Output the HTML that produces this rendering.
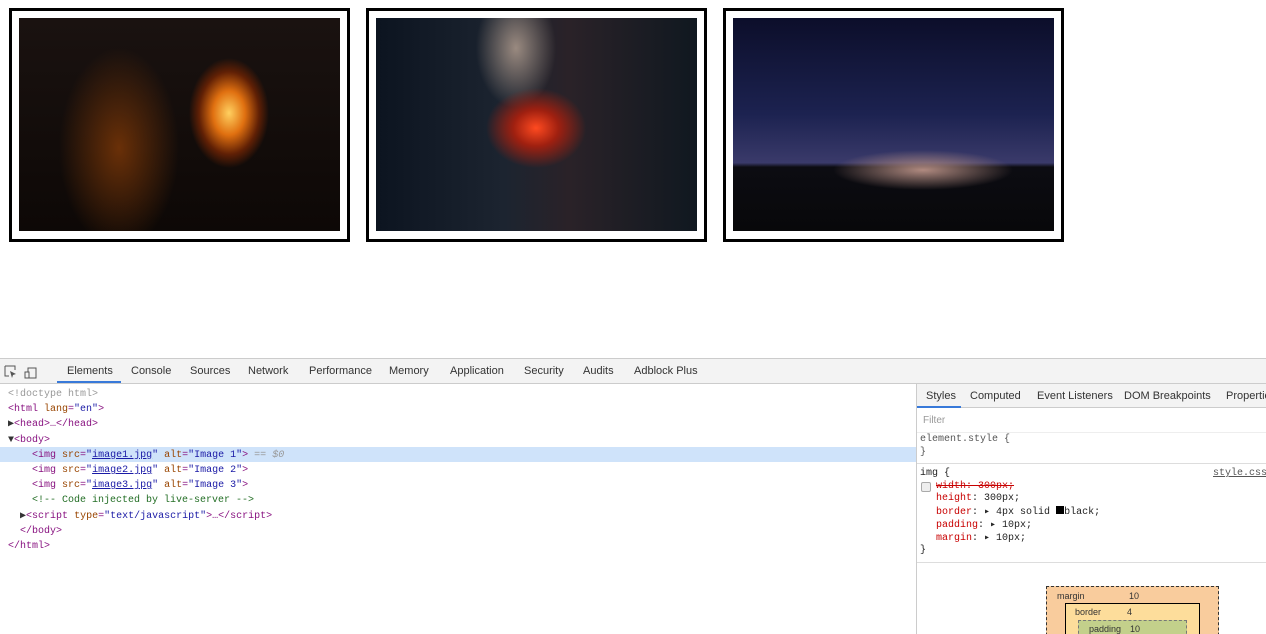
<!DOCTYPE html>
<html><head><style>
*{margin:0;padding:0;box-sizing:border-box}
body{width:1266px;height:634px;background:#fff;position:relative;overflow:hidden;font-family:"Liberation Sans",sans-serif}
.f{position:absolute;top:8px;width:341px;height:234px;border:3px solid #000;background:#fff}
.p{position:absolute;left:7px;top:7px;width:321px;height:213px;overflow:hidden}
.dt{position:absolute;left:0;top:358px;width:1266px;height:276px;background:#fff;border-top:1px solid #ccc;overflow:hidden}
.tabs{position:absolute;left:0;top:0;width:1266px;height:25px;background:#f3f3f3;border-bottom:1px solid #ccc;font-size:11px;color:#333}
.tabs span{position:absolute;top:6px}
.code{position:absolute;font-family:"Liberation Mono",monospace;font-size:10px;line-height:15.2px;white-space:pre;color:#881280}
.a{color:#994500}.v{color:#1a1aa6}.u{color:#1a1aa6;text-decoration:underline}.g{color:#236e25}.gr{color:#999}
.rp{position:absolute;left:916px;top:25px;width:350px;height:251px;border-left:1px solid #ccc;overflow:hidden}
.css{font-family:"Liberation Mono",monospace;font-size:10px;color:#222;position:absolute;white-space:pre;line-height:12.7px}
.css i{font-style:normal;padding-left:16px}
.r{color:#c80000}
</style></head><body>
<div class="f" style="left:9px"><div class="p" style="background:radial-gradient(ellipse 40px 55px at 210px 95px,#ffd060,#e07010 40%,#602005 75%,transparent 100%),radial-gradient(ellipse 60px 100px at 100px 130px,#6a3008,transparent),linear-gradient(#1a1210,#0d0806)"></div></div>
<div class="f" style="left:366px"><div class="p" style="background:radial-gradient(ellipse 50px 40px at 160px 110px,#ff4a20,#a02010 45%,transparent 100%),radial-gradient(ellipse 40px 60px at 140px 30px,#9a8a80,transparent),linear-gradient(90deg,#0c1420,#1c2430 40%,#2a2228 60%,#101820)"></div></div>
<div class="f" style="left:723px"><div class="p" style="background:radial-gradient(ellipse 90px 20px at 190px 152px,#b08a80,transparent),linear-gradient(#0c0e2a,#1c2250 45%,#3a3a6a 68%,#0c0c12 70%,#08080a)"></div></div>

<div class="dt">
<div class="tabs">
<svg style="position:absolute;left:4px;top:6px" width="34" height="14"><path d="M1 1h10v4M1 1v10h4" stroke="#555" fill="none"/><path d="M6 6l6 3-3 1-1 3z" fill="#555"/><rect x="24" y="3" width="8" height="10" stroke="#555" fill="none"/><rect x="21" y="7" width="4" height="6" stroke="#555" fill="#f3f3f3"/></svg>
<span style="left:67px;color:#333">Elements</span><div style="position:absolute;left:57px;top:22px;width:64px;height:2px;background:#3879d9"></div>
<span style="left:131px">Console</span><span style="left:190px">Sources</span><span style="left:248px">Network</span><span style="left:309px">Performance</span><span style="left:389px">Memory</span><span style="left:450px">Application</span><span style="left:524px">Security</span><span style="left:583px">Audits</span><span style="left:634px">Adblock Plus</span>
</div>
<div style="position:absolute;left:0;top:88px;width:916px;height:15px;background:#cfe3fa"></div>
<div class="code" style="left:8px;top:28px"><span class="gr">&lt;!doctype html&gt;</span>
&lt;html <span class="a">lang</span>=<span class="v">"en"</span>&gt;
<span style="color:#333">▶</span>&lt;head&gt;…&lt;/head&gt;
<span style="color:#333">▼</span>&lt;body&gt;
    &lt;img <span class="a">src</span>=<span class="v">"</span><span class="u">image1.jpg</span><span class="v">"</span> <span class="a">alt</span>=<span class="v">"Image 1"</span>&gt; <span class="gr">== <i>$0</i></span>
    &lt;img <span class="a">src</span>=<span class="v">"</span><span class="u">image2.jpg</span><span class="v">"</span> <span class="a">alt</span>=<span class="v">"Image 2"</span>&gt;
    &lt;img <span class="a">src</span>=<span class="v">"</span><span class="u">image3.jpg</span><span class="v">"</span> <span class="a">alt</span>=<span class="v">"Image 3"</span>&gt;
    <span class="g">&lt;!-- Code injected by live-server --&gt;</span>
  <span style="color:#333">▶</span>&lt;script <span class="a">type</span>=<span class="v">"text/javascript"</span>&gt;…&lt;/script&gt;
  &lt;/body&gt;
&lt;/html&gt;</div>
<div class="rp">
<div style="height:24px;background:#f3f3f3;border-bottom:1px solid #ccc;font-size:11px;color:#333;position:relative">
<span style="position:absolute;left:9px;top:6px">Styles</span><div style="position:absolute;left:0;top:22px;width:44px;height:2px;background:#3879d9"></div>
<span style="position:absolute;left:53px;top:6px">Computed</span><span style="position:absolute;left:120px;top:6px">Event Listeners</span><span style="position:absolute;left:207px;top:6px">DOM Breakpoints</span><span style="position:absolute;left:309px;top:6px">Properties</span></div>
<div style="position:absolute;left:2px;top:26px;width:336px;height:20px;background:#fff;font-size:10px;color:#999;padding:5px 4px">Filter</div>
<div style="position:absolute;left:0;top:48px;width:350px;height:32px;border-bottom:1px solid #ddd;border-top:1px solid #eee;background:#fff"></div>
<div class="css" style="left:3px;top:50px;color:#555">element.style {
}</div>
<div class="css" style="left:3px;top:84px">img {
<i><s class="r">width: 300px;</s></i>
<i><span class="r">height</span>: 300px;</i>
<i><span class="r">border</span>: ▸ 4px solid <span style="display:inline-block;width:8px;height:8px;background:#000"></span>black;</i>
<i><span class="r">padding</span>: ▸ 10px;</i>
<i><span class="r">margin</span>: ▸ 10px;</i>
}</div>
<div style="position:absolute;left:4px;top:98px;width:10px;height:10px;border:1px solid #aaa;border-radius:2px;background:#eee"></div>
<div class="css" style="left:296px;top:84px;color:#555;text-decoration:underline">style.css</div>
<div style="position:absolute;left:0;top:178px;width:350px;border-top:1px solid #ddd"></div>
<div style="position:absolute;left:129px;top:202px;width:173px;height:60px;background:#f9cc9d;border:1px dashed #333;font-size:9px;color:#333">
<span style="position:absolute;left:10px;top:4px">margin</span><span style="position:absolute;left:82px;top:4px">10</span>
<div style="position:absolute;left:18px;top:16px;width:135px;height:50px;background:#fddd9b;border:1px solid #000"><span style="position:absolute;left:9px;top:3px">border</span><span style="position:absolute;left:61px;top:3px">4</span>
<div style="position:absolute;left:12px;top:16px;width:109px;height:30px;background:#c3d08b;border:1px dashed #777"><span style="position:absolute;left:10px;top:3px">padding</span><span style="position:absolute;left:51px;top:3px">10</span></div></div></div>
</div>
</div>
</body></html>
